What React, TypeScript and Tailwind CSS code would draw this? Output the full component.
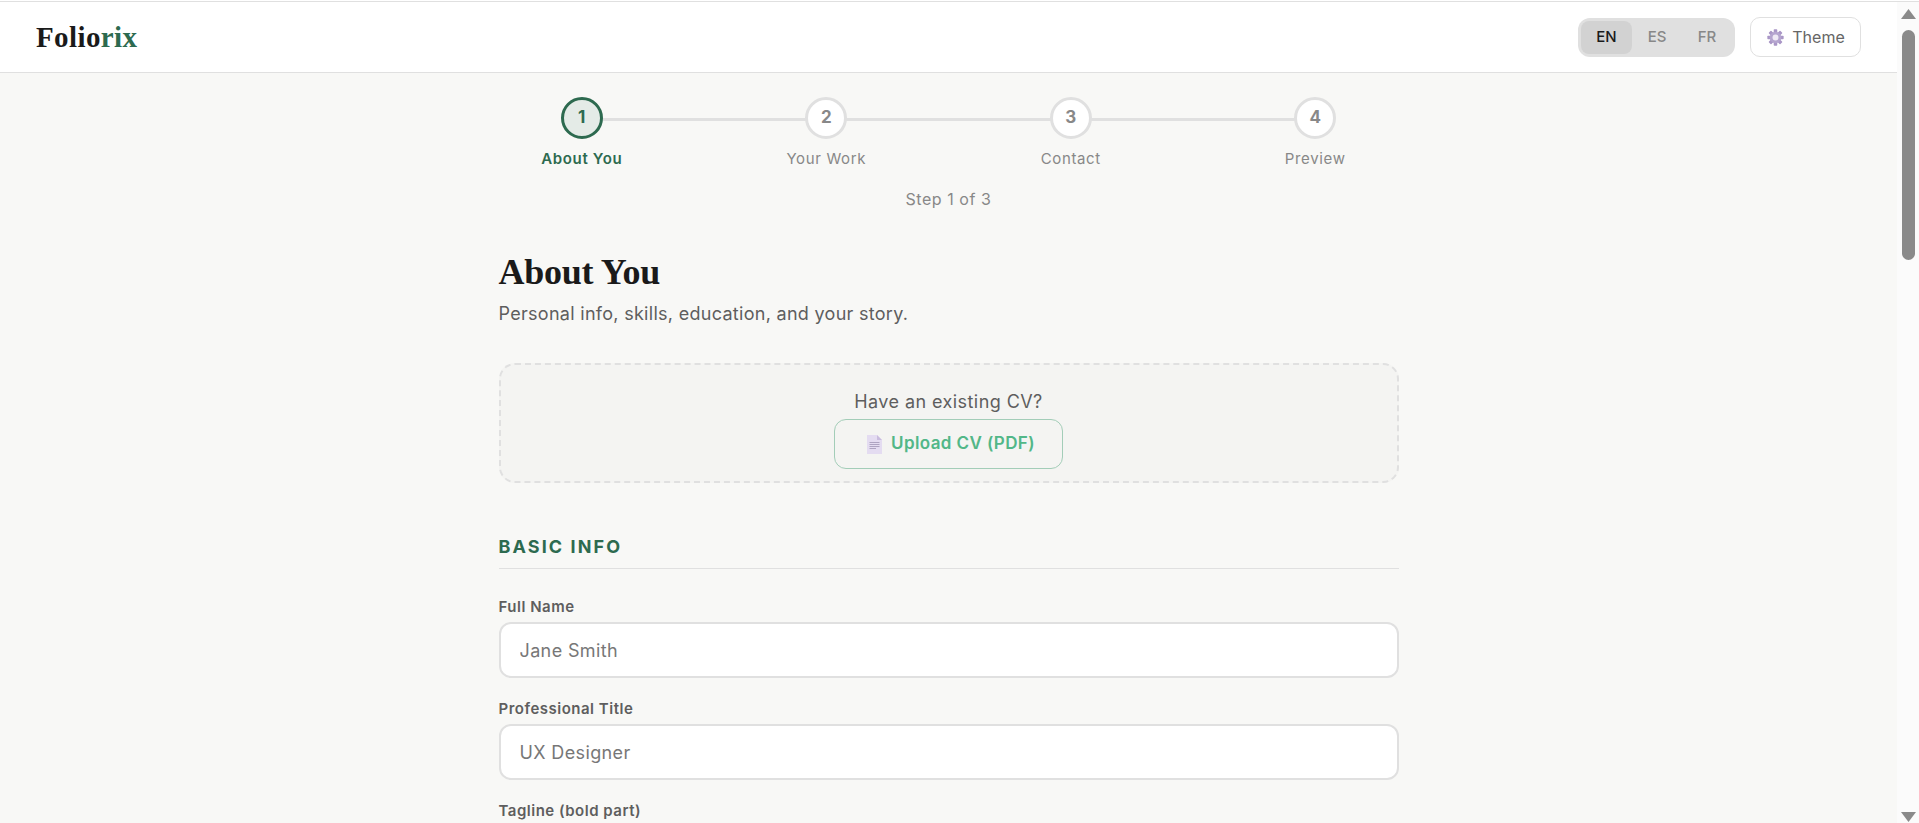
import React from "react";

const sans = "font-['Inter','Liberation_Sans',sans-serif]";
const serif = "font-['Liberation_Serif',serif]";

function Gear() {
  return (
    <svg width="17" height="17" viewBox="0 0 24 24" aria-hidden="true">
      <g fill="#a996c6">
        {[0, 45, 90, 135, 180, 225, 270, 315].map((a) => (
          <rect key={a} x="9.5" y="0.5" width="5" height="6" rx="1" transform={`rotate(${a} 12 12)`} />
        ))}
      </g>
      <circle cx="12" cy="12" r="8.2" fill="#b5a5cf" />
      <circle cx="12" cy="12" r="4.2" fill="#efeaf5" />
    </svg>
  );
}

function DocIcon() {
  return (
    <svg width="15" height="19" viewBox="0 0 15 19" aria-hidden="true">
      <path d="M0 0H10L15 5V19H0Z" fill="#e4dcf1" />
      <path d="M10 0L15 5H10Z" fill="#c9bcde" />
      <path d="M2.5 7.5H12.5M2.5 9.5H12.5M2.5 11.5H12.5M2.5 13.5H9" stroke="#a79dbb" strokeWidth="0.9" />
    </svg>
  );
}

function Step({ n, label, active }: { n: number; label: string; active?: boolean }) {
  return (
    <div className="flex-1 flex flex-col items-center relative">
      {n < 4 && <div className="absolute top-[21px] left-1/2 w-full h-[3px] bg-[#e0e0e0]" />}
      <div
        className={
          active
            ? "relative z-10 w-[42px] h-[42px] rounded-full border-[3px] border-[#2d6a4f] bg-[#e4ebe7] text-[#2d6a4f] flex items-center justify-center text-[17px] font-bold"
            : "relative z-10 w-[42px] h-[42px] rounded-full border-[3px] border-[#e0e0e0] bg-white text-[#888888] flex items-center justify-center text-[17px] font-bold"
        }
      >
        {n}
      </div>
      <div
        className={
          active
            ? "mt-[9px] text-[15px] leading-[22px] font-semibold text-[#2d6a4f] tracking-[0.65px]"
            : "mt-[9px] text-[15px] leading-[22px] text-[#888888] tracking-[0.65px]"
        }
      >
        {label}
      </div>
    </div>
  );
}

function Field({ label, placeholder }: { label: string; placeholder: string }) {
  return (
    <div className="mb-[20px]">
      <label className="block text-[15px] leading-[22px] font-semibold tracking-[0.5px] text-[#5e5e5e] mb-[4px]">{label}</label>
      <input
        readOnly
        placeholder={placeholder}
        className="w-full h-[56px] px-[19px] rounded-[12px] border-2 border-[#e0e0e0] bg-white text-[18px] tracking-[0.37px] placeholder:text-[#777777] outline-none"
      />
    </div>
  );
}

export default function App() {
  return (
    <div className={`h-[823px] overflow-hidden flex flex-col bg-[#fbfbfb] ${sans}`}>
      <div className="h-px shrink-0 bg-white" />
      <div className="h-px shrink-0 bg-[#e0e0e0]" />
      <div className="flex-1 min-h-0 flex">
        <div className="flex-1 min-w-0 bg-[#f8f8f6]">
          <header className="h-[71px] bg-white border-b border-[#e0e0e0] flex items-center justify-between px-[36px]">
            <div className={`${serif} text-[29px] font-bold tracking-[0.4px] text-[#1a1a1a] leading-none`}>
              Folio<span className="text-[#2d6a4f]">rix</span>
            </div>
            <div className="flex items-center gap-[15px]">
              <div className="w-[157px] h-[39px] rounded-[12px] bg-[#e0e0e0] flex items-center p-[3px] text-[15px] font-medium">
                <div className="w-[51px] h-[33px] rounded-[8px] bg-[#d2d2d2] text-[#1a1a1a] flex items-center justify-center">EN</div>
                <div className="w-[50px] h-[33px] text-[#888888] flex items-center justify-center">ES</div>
                <div className="w-[50px] h-[33px] text-[#888888] flex items-center justify-center">FR</div>
              </div>
              <button className="w-[111px] h-[40px] pl-[1px] rounded-[10px] border border-[#e0e0e0] bg-white text-[#666666] text-[16px] flex items-center justify-center gap-[8px]">
                <Gear />
                Theme
              </button>
            </div>
          </header>

          <div className="w-[978px] mx-auto pt-[24px] flex">
            <Step n={1} label="About You" active />
            <Step n={2} label="Your Work" />
            <Step n={3} label="Contact" />
            <Step n={4} label="Preview" />
          </div>
          <div className="text-center text-[16px] leading-[24px] tracking-[0.55px] text-[#888888] mt-[17px]">Step 1 of 3</div>

          <main className="w-[900px] mx-auto mt-[37px]">
            <h1 className={`${serif} text-[36px] leading-[48px] font-bold tracking-[-0.25px] text-[#1a1a1a]`}>About You</h1>
            <p className="text-[18px] leading-[26px] tracking-[0.29px] text-[#5e5e5e] mt-[5px]">Personal info, skills, education, and your story.</p>

            <div className="mt-[36px] h-[120px] rounded-[16px] border-2 border-dashed border-[#e0e0e0] bg-[#f4f4f2] flex flex-col items-center pt-[24px]">
              <div className="text-[18px] leading-[26px] tracking-[0.43px] text-[#5e5e5e]">Have an existing CV?</div>
              <button className="mt-[4px] w-[229px] h-[50px] pl-[5px] rounded-[12px] border border-[#a3cdb8] text-[#52b788] text-[17px] font-semibold tracking-[0.4px] flex items-center justify-center gap-[9px]">
                <DocIcon />
                Upload CV (PDF)
              </button>
            </div>

            <div className="mt-[51px] pb-[9px] border-b border-[#e0e0e0]">
              <h2 className="text-[18px] leading-[25px] font-bold tracking-[2.1px] text-[#2d6a4f]">BASIC INFO</h2>
            </div>

            <div className="mt-[27px]">
              <Field label="Full Name" placeholder="Jane Smith" />
              <Field label="Professional Title" placeholder="UX Designer" />
              <Field label="Tagline (bold part)" placeholder="" />
            </div>
          </main>
        </div>

        <div className="w-[22px] shrink-0 bg-[#fbfbfb] flex flex-col items-center">
          <svg width="15" height="11" viewBox="0 0 15 11" className="mt-[7px]" aria-hidden="true">
            <path d="M7.5 0L15 10H0Z" fill="#8a8a8a" />
          </svg>
          <div className="mt-[10px] w-[13px] h-[230px] rounded-full bg-[#8a8a8a]" />
          <svg width="15" height="11" viewBox="0 0 15 11" className="mt-auto" aria-hidden="true">
            <path d="M0 0H15L7.5 10Z" fill="#8a8a8a" />
          </svg>
        </div>
      </div>
    </div>
  );
}
